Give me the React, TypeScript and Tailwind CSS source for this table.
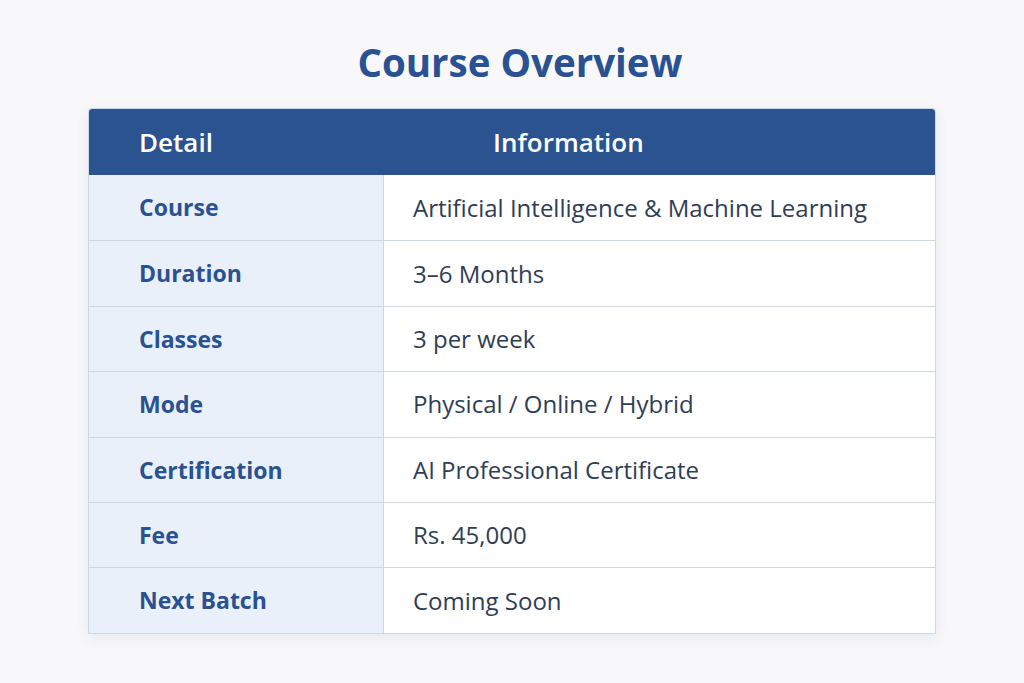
import React from "react";

const rows: [string, string][] = [
  ["Course", "Artificial Intelligence & Machine Learning"],
  ["Duration", "3–6 Months"],
  ["Classes", "3 per week"],
  ["Mode", "Physical / Online / Hybrid"],
  ["Certification", "AI Professional Certificate"],
  ["Fee", "Rs. 45,000"],
  ["Next Batch", "Coming Soon"],
];

export default function App() {
  return (
    <div
      className="w-[1024px] h-[683px] bg-[#f8f8fa] flex flex-col items-center"
      style={{ fontFamily: "'Open Sans', Lato, sans-serif" }}
    >
      <h1 className="mt-[37px] ml-[16px] h-[50px] text-[38.5px] leading-[50px] font-bold text-[#2a5192]">
        Course Overview
      </h1>
      <div className="mt-[21px] w-[848px] rounded-t-[4px] overflow-hidden border border-[#cfd9e6] shadow-[0_4px_14px_rgba(30,50,90,0.08)]">
        <div className="h-[66px] bg-[#2b5390] flex items-center text-white text-[26px] font-semibold">
          <div className="w-[295px] pl-[50px]">Detail</div>
          <div className="pl-[109px]">Information</div>
        </div>
        {rows.map(([k, v], i) => (
          <div
            key={k}
            className={`flex h-[65.4px] ${i > 0 ? "border-t border-[#cfd9e6]" : ""}`}
          >
            <div className="w-[295px] bg-[#e9f0f9] border-r border-[#cfd9e6] flex items-center pl-[50px] text-[23px] font-bold text-[#2a5192]">
              {k}
            </div>
            <div className="flex-1 bg-white flex items-center pl-[29px] text-[24px] text-[#2f3d55]">
              {v}
            </div>
          </div>
        ))}
      </div>
    </div>
  );
}
